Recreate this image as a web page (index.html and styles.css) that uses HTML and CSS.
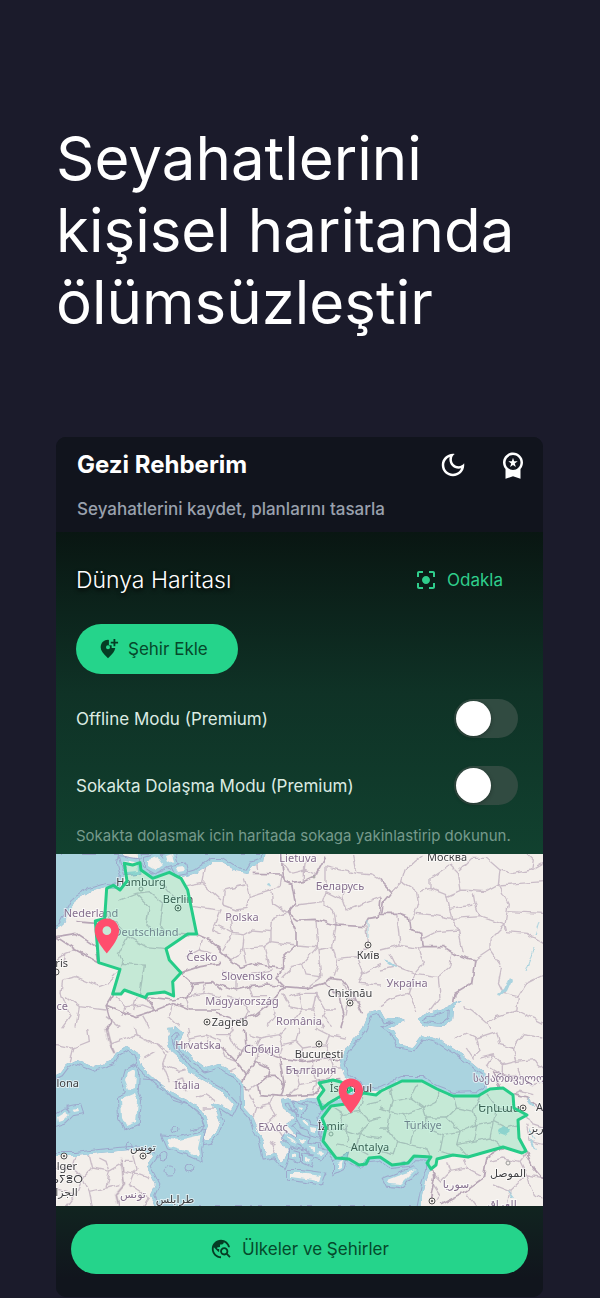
FILE: index.html
```html
<!DOCTYPE html>
<html lang="tr">
  <head>
    <meta charset="UTF-8">
    <meta name="viewport" content="width=device-width, initial-scale=1.0">
    <title>Gezi Rehberim</title>
    <link rel="stylesheet" href="styles.css">
  </head>
  <body>
    <h1 class="headline">Seyahatlerini kişisel haritanda ölümsüzleştir</h1>

    <main class="card">
      <header class="topbar">
        <div class="topbar-row">
          <h2 class="app-name">Gezi Rehberim</h2>
          <button class="icon-btn" type="button" aria-label="Koyu tema">
            <svg viewBox="0 0 24 24"><path d="M9.37,5.51C9.19,6.15,9.1,6.82,9.1,7.5c0,4.08,3.32,7.4,7.4,7.4c0.68,0,1.35-0.09,1.99-0.27C17.45,17.19,14.93,19,12,19c-3.86,0-7-3.14-7-7C5,9.07,6.81,6.55,9.37,5.51z M12,3c-4.97,0-9,4.03-9,9s4.03,9,9,9s9-4.03,9-9c0-0.46-0.04-0.92-0.1-1.36c-0.98,1.37-2.58,2.26-4.4,2.26c-2.98,0-5.4-2.42-5.4-5.4c0-1.81,0.89-3.42,2.26-4.4C12.92,3.04,12.46,3,12,3z"/></svg>
          </button>
          <button class="icon-btn" type="button" aria-label="Rozetler">
            <svg viewBox="0 0 24 24"><path d="M9.68,13.69L12,11.93l2.31,1.76l-0.88-2.85L15.75,9h-2.84L12,6.19L11.09,9H8.25l2.31,1.84L9.68,13.69z M20,10c0-4.42-3.58-8-8-8s-8,3.58-8,8c0,2.03,0.76,3.87,2,5.28V23l6-2l6,2v-7.72C19.24,13.87,20,12.03,20,10z M12,4c3.31,0,6,2.69,6,6s-2.69,6-6,6s-6-2.69-6-6S8.69,4,12,4z"/></svg>
          </button>
        </div>
        <p class="tagline">Seyahatlerini kaydet, planlarını tasarla</p>
      </header>

      <section class="world">
        <div class="world-head">
          <h3 class="world-title">Dünya Haritası</h3>
          <button class="focus-btn" type="button">
            <svg viewBox="0 0 24 24"><path d="M12 8c-2.21 0-4 1.79-4 4s1.79 4 4 4 4-1.79 4-4-1.79-4-4-4zm-7 7H3v4c0 1.1.9 2 2 2h4v-2H5v-4zM5 5h4V3H5c-1.1 0-2 .9-2 2v4h2V5zm14-2h-4v2h4v4h2V5c0-1.1-.9-2-2-2zm0 16h-4v2h4c1.1 0 2-.9 2-2v-4h-2v4z"/></svg>
            Odakla
          </button>
        </div>
        <button class="pill add-btn" type="button">
          <svg viewBox="0 0 24 24"><path fill-rule="evenodd" d="M20 1v3h3v2h-3v3h-2V6h-3V4h3V1zM13 2.1V8h3v3h3.9C19.6 14.2 16.9 17.800 12 22C6.700 17.500 4 13.500 4 10.200C4 5.200 7.800 2 12 2zM12 8a2.200 2.200 0 1 0 0 4.400a2.200 2.200 0 0 0 0-4.400z"/></svg>
          Şehir Ekle
        </button>
        <div class="option">
          <label for="offline">Offline Modu (Premium)</label>
          <input class="switch" type="checkbox" role="switch" id="offline">
        </div>
        <div class="option">
          <label for="street">Sokakta Dolaşma Modu (Premium)</label>
          <input class="switch" type="checkbox" role="switch" id="street">
        </div>
        <p class="hint">Sokakta dolasmak icin haritada sokaga yakinlastirip dokunun.</p>
      </section>

      <svg class="map" viewBox="56 854 487 352" role="img" aria-label="Harita">
        <defs>
          <filter id="rough" x="0" y="0" width="100%" height="100%" color-interpolation-filters="sRGB">
            <feTurbulence type="fractalNoise" baseFrequency="0.14" numOctaves="1" seed="4"/>
            <feDisplacementMap in="SourceGraphic" scale="6" xChannelSelector="R" yChannelSelector="G"/>
          </filter>
          <path id="water" d="M50 932L62 926L69 913L76 900L89 892L106 887L119 888L124 877L121 863L124 850H50Z
            M136 850L139 868L151 878L168 872L183 877L196 873L212 862L222 862L236 871L248 873L253 865L264 862L266 850Z
            M50 1078L60 1073L66 1065L76 1060L94 1067L111 1061L116 1053L128 1046L138 1053L143 1068L156 1080L173 1093L189 1101L203 1111L208 1125L203 1141L209 1140L216 1131L220 1121L216 1111L212 1103L223 1106L231 1111L234 1105L221 1091L203 1081L189 1071L179 1058L171 1051L168 1038L175 1026L183 1033L178 1043L189 1055L206 1068L220 1064L233 1073L243 1082L244 1108L253 1118L256 1128L263 1141L266 1156L275 1154L283 1163L288 1151L281 1141L299 1145L296 1135L286 1124L295 1118L283 1108L281 1100L290 1098L294 1106L302 1099L316 1098L325 1104L340 1098L349 1091L360 1092L350 1102L331 1106L321 1118L326 1128L323 1141L336 1158L349 1158L359 1165L369 1158L380 1157L391 1165L408 1163L414 1156L430 1157L430 1170L425 1185L420 1210H157L151 1195L156 1185L151 1175L146 1166L153 1156L144 1151L129 1150L99 1153L76 1156H50Z
            M363 1028L357 1036L349 1045L340 1061L344 1075L356 1083L363 1092L381 1090L402 1080L422 1080L437 1090L453 1096L478 1095L488 1088L487 1075L473 1063L457 1051L440 1040L422 1035L413 1047L400 1045L395 1033L388 1028L405 1021L398 1018L385 1019L380 1010L369 1013Z
            M417 1019L428 1013L440 1010L463 1000L453 1007L452 1020L443 1027L423 1025Z"/>
          <clipPath id="sea"><use href="#water"/></clipPath>
          <path id="isles" d="M127 1073l7-4l2 5l-1 14l-6 2l-4-10Z
            M121 1099l14-6l3 8l-2 21l-10 4l-4-8Z
            M167 1139l12 1l22-5l-3 13l1 9l-13-6l-16-5Z
            M291 1173l10 0l20 3l-2 5l-28-4Z
            M387 1180l10-4l18-6l-9 9l-6 6l-11-1Z
            M57 1117l8-5l4 3l-5 5l-6 2Z M72 1109l6-1l1 3l-5 1Z
            M301 1120l6 2l2 5l-6-2Z M311 1127l5 1l0 6l-4-1Z M300 1138l5 2l-1 4l-4-2Z M309 1146l6 1l0 4l-5-1Z M318 1151l5 1l-2 4l-4-1Z M292 1153l4 1l0 4l-4-1Z M305 1157l5 1l-1 4l-4-2Z M337 1163l6-3l-2 7l-4 2Z M298 1107l4 1l-2 3Z M287 1136l6 4l4 4l-5-2l-6-4Z
            M148 860l10-3l5 7l-8 6l-7-4Z M166 857l6-2l2 6l-6 2Z M176 868l7-1l1 4l-6 1Z M124 860l12 2l1 9l-10 1Z"/>
        </defs>

        <rect class="land" x="56" y="854" width="487" height="352"/>

        <g filter="url(#rough)">
          <!-- regions -->
          <g class="region">
            <path transform="translate(56 850) scale(.3333)" d="M20 350L30 310M20 390L60 380L130 410L155 400L192 358M30 440L70 470L150 480M20 390L15 430L45 500L20 535M70 470L60 530M0 330L30 310L60 300M190 310L215 260L270 290L330 296M190 310L200 340L265 345L250 440M200 340L192 358M152 190L190 230L215 260M240 130L280 170L270 230L330 250L400 255M190 150L240 130L280 125L320 160L310 220L330 250M320 100L350 140L400 150M440 100L495 150M410 170L495 180L470 240L495 250M450 40L440 100L390 110M350 460L340 500L370 530M400 480L390 440L440 430L450 395M180 440L210 470L200 500M240 445L230 480M210 470L260 465L300 480M150 500L190 530M260 500L280 535M390 320L430 300L470 310M430 300L440 270M440 430L495 440"/>
            <path transform="translate(216 850) scale(.3333)" d="M85 85L100 140L90 175L60 180L20 165L25 120L85 105M100 140L190 110L195 72M165 125L170 160L215 188M0 225L50 250L85 255L110 240L165 245M50 250L40 190M165 245L170 205L215 188M165 245L165 275L240 285M85 255L80 295L145 290L165 275M80 295L90 340M145 290L160 350M20 300L50 250M50 335L80 295M300 208L305 290L240 285M305 290L260 340L230 350L200 380M305 290L315 380L270 415M360 225L350 290L365 345L355 380M305 300L350 290M365 325L420 320L455 290L450 230M420 320L440 370L495 340M440 370L430 400L495 405M355 190L360 225M240 165L320 155L355 190M320 155L330 125L380 150L390 180L495 140M330 125L330 50L420 70L470 75L495 90M265 92L265 60L225 70L200 40M380 150L385 120M260 340L270 375L315 380M220 440L250 430L300 430L330 480L360 480M250 430L260 480L230 520M300 430L290 480L260 480M290 480L320 535M330 480L320 500L350 530M200 430L220 470L260 480M170 450L180 490L150 530M20 360L60 380L120 370L170 360M60 380L60 420M30 440L80 450L100 480L80 530M100 410L110 440L150 440M380 400L400 440L390 500M400 440L430 460M120 20L125 60M270 20L265 60L300 75M410 15L420 70"/>
            <path transform="translate(380 850) scale(.3333)" d="M65 95L75 60L130 15M65 95L110 125L115 155L105 190L90 215M65 95L35 125M120 125L150 115L200 135L210 180L215 205L160 195L110 190M150 115L150 85L210 45L235 70L243 120L200 140M243 120L320 125L355 105L360 60L320 25L275 25L240 60M280 130L285 160L300 200L215 205M210 175L280 165M355 105L385 160L375 225L300 200M355 105L420 100L490 95M360 60L400 70L455 60L490 40M385 185L490 190M375 225L380 245L440 250L490 280M215 205L235 240L250 310M130 265L170 245L235 240M375 225L330 270L330 300L285 330M330 300L365 350L355 400L370 430L415 440L410 480L350 500L320 520M415 440L440 400L490 375M0 300L60 285L50 190M60 285L115 295L130 340L105 370L50 350L30 310M115 295L130 290M105 370L175 380L210 350L215 310M175 380L180 440L150 480M105 370L85 430L45 440L0 470M85 430L110 480M275 480L320 520L330 540M410 480L490 520M275 480L250 470M0 360L50 350M455 60L460 30L440 10"/>
            <path transform="translate(56 1028) scale(.3333)" d="M0 50L50 60L40 100M50 60L100 40L95 0M175 75L160 50L240 20L235 0M240 20L300 50L330 80L320 110L340 160M300 50L340 70M265 90L300 70M320 110L370 130L390 125M420 210L450 200L480 220M350 160L380 150L390 190M440 240L480 240M60 385L50 420L80 450L60 500M100 380L110 420L80 450M110 420L160 430L195 410M130 390L150 400L160 430L150 480L100 490L80 450M150 480L190 470M100 490L110 540M205 430L260 440L280 450M230 380L240 420L220 470L250 490M60 500L30 540M0 420L50 420M0 480L60 500M250 490L280 510L260 540M205 400L230 400M395 0L400 30L450 20L495 40M400 30L390 60M450 20L460 60"/>
            <path transform="translate(216 1028) scale(.3333)" d="M0 20L40 20L60 60L85 70M40 20L50 0M100 20L130 30L120 50M130 30L190 20L200 50L190 90M190 20L210 0M200 50L240 40L260 60L250 100M240 40L250 0M260 60L330 50L340 90M330 50L340 20L300 0M340 20L390 30M210 120L240 130L250 170L220 200M240 130L290 120L300 160L250 170M290 120L290 90M300 160L340 150L350 120L380 120M300 160L290 200M350 120L340 90M100 200L120 240L110 270M120 240L160 230L180 260L150 290M160 230L170 205M120 100L130 70L170 80M140 300L190 310L210 340M160 340L180 350L170 380M20 60L30 90L60 100M95 190L125 170M60 120L40 130M350 240L380 260L370 300L330 310M380 260L430 250L440 210M430 250L460 280L430 320L370 300M430 320L420 360L360 350M460 280L495 270M420 360L460 380M390 290L395 340M450 230L495 220M430 320L495 330"/>
            <path transform="translate(380 1028) scale(.3333)" d="M30 180L40 220L90 210L110 170M90 210L130 240L170 220L180 190M40 220L30 250L0 240M30 250L70 260L130 240M130 240L140 270L200 270L230 240L220 205M230 240L280 250L300 204M280 250L290 290L240 310L200 270M290 290L340 280L350 240L320 200M350 240L400 250M340 280L380 300L415 290M340 280L330 330L370 358M240 310L230 350L265 387M240 310L190 320L140 300L140 270M190 320L180 370L218 380M140 300L100 310L70 260M100 310L90 350L50 340L20 300L30 250M90 350L140 360L150 387M50 340L40 380L0 370M290 290L280 340L330 330M280 340L230 350M0 300L20 300M225 30L260 15L290 30L300 70L280 90L260 60M290 30L350 10L360 50L400 60L430 20L490 30M400 60L410 100L370 110L340 80L300 90M410 100L460 95L490 120M340 80L320 110L370 140L370 110M370 160L420 150L460 170L490 160M420 150L410 120M400 200L420 190L460 200M440 260L460 290L490 300M440 290L450 340L490 350M200 400L210 430L180 460L160 440M210 430L260 420L300 440M260 420L250 390M330 400L370 390L420 400L440 375M420 400L440 440L490 450M340 470L390 490L440 440M390 490L380 540M260 500L290 540M440 440L460 500L490 510M160 470L180 500L170 520"/>
          </g>
          <!-- borders between countries -->
          <g class="border">
            <path transform="translate(56 850) scale(.3333)" d="M0 260L60 250L120 290L128 338L60 300L0 260M170 432L150 465L210 490L240 500L300 480L270 440M150 465L165 520L150 540M420 252L460 270L495 300M375 368L430 350L495 340M270 440L350 450L400 440L410 400L375 368M410 400L470 395L495 420M300 480L350 460L400 480L495 480M60 215L120 220"/>
            <path transform="translate(216 850) scale(.3333)" d="M110 70L195 72L205 95L228 105L238 160L215 188L240 245L240 285L200 325L200 355L160 350L110 340L75 352L50 335L0 290M215 188L245 210L300 208L360 225L445 230L460 205L490 200L495 140M228 97L265 92L300 75L330 20M200 355L180 385L205 410L270 415L325 400L340 385L380 390L410 430L440 490M205 410L150 405L100 410L60 420L0 400M205 410L150 470L120 495L60 510L0 490M325 400L370 440L385 500L375 535M195 20L205 95"/>
            <path transform="translate(380 850) scale(.3333)" d="M0 90L35 125L10 155L5 190L60 190L85 200L90 240L125 250L130 290L190 290L230 315L285 330L275 400L225 430L220 470"/>
            <path transform="translate(56 1028) scale(.3333)" d="M150 0L160 40L175 75M195 390L205 470L180 500L190 540M340 0L345 20"/>
            <path transform="translate(216 1028) scale(.3333)" d="M60 100L90 140L75 170L95 190M90 140L120 100L160 120L155 145L125 170L130 200L195 205L205 170L180 145L155 145M195 205L290 200L310 190L310 160L370 155M205 170L190 90L260 100L330 90L400 100M60 100L20 60L0 50M85 0L90 50L120 60L190 90M60 100L90 50"/>
            <path transform="translate(380 1028) scale(.3333)" d="M340 130L360 180M340 130L420 150M400 200L440 210L495 250M438 370L460 420L495 460M370 358L320 390L310 450L240 500L180 530M140 410L165 440L150 520"/>
          </g>
          <!-- sea with its outer limit line -->
          <g clip-path="url(#sea)">
            <use href="#water" class="water"/>
            <use href="#water" class="limit"/>
            <use href="#water" class="shelf"/>
          </g>
          <use href="#isles" class="limit"/>
          <use href="#isles" class="shelf"/>
          <use href="#isles" class="land"/>
          <g class="limit-line">
            <path d="M143 1079L155 1080L168 1091L173 1100L189 1105L201 1116L204 1127L190 1130"/>
            <circle cx="175" cy="1129" r="3"/><circle cx="163" cy="1156" r="4"/><circle cx="189" cy="1168" r="4"/><ellipse cx="170" cy="1171" rx="6" ry="4"/><circle cx="129" cy="1146" r="4"/>
          </g>
          <path class="water" d="M498 1130l4-4l6 2l2 4l-5 4l-6-2ZM498 994l6-4l6-12l2 2l-5 11l-7 6ZM384 960l6 2l8 6l-2 1l-8-5ZM527 1098l4 2l4 7l-3 0ZM530 1138l3 4l4 8l-3-1ZM508 1190l3 4l3 4l-3 0ZM168 1028l5-1l0 6l-4 1ZM268 884l3 1l-1 2l-3-1Z"/>
          <path class="river" d="M526 972l5-13l4-12M536 935l4-14M368 920v18M530 1128l4 12"/>
        </g>

        <g class="country">
          <text x="91" y="917">Nederland</text>
          <text x="146" y="936">Deutschland</text>
          <text x="242" y="921">Polska</text>
          <text x="298" y="862">Lietuva</text>
          <text x="340" y="890">Беларусь</text>
          <text x="202" y="961">Česko</text>
          <text x="247" y="980">Slovensko</text>
          <text x="242" y="1005">Magyarország</text>
          <text x="407" y="987">Україна</text>
          <text x="299" y="1025">România</text>
          <text x="198" y="1049">Hrvatska</text>
          <text x="262" y="1053">Србија</text>
          <text x="311" y="1074">България</text>
          <text x="187" y="1089">Italia</text>
          <text x="273" y="1131">Ελλάς</text>
          <text x="423" y="1129">Türkiye</text>
          <text x="456" y="1188">سوريا</text>
          <text x="133" y="1198">تونس</text>
          <text x="502" y="1208">العراق</text>
          <text class="from" x="473" y="1082">საქართველო</text>
          <text class="to" x="68" y="1010">ce</text>
        </g>
        <g class="city">
          <text x="141" y="886">Hamburg</text>
          <text x="178" y="903">Berlin</text>
          <text x="447" y="861">Москва</text>
          <text x="368" y="959">Київ</text>
          <text x="350" y="997">Chișinău</text>
          <text x="230" y="1026">Zagreb</text>
          <text x="319" y="1058">București</text>
          <text x="351" y="1092">İstanbul</text>
          <text x="331" y="1130">İzmir</text>
          <text x="370" y="1151">Antalya</text>
          <text x="499" y="1112">Երևան</text>
          <text x="508" y="1177">الموصل</text>
          <text x="143" y="1151">تونس</text>
          <text x="175" y="1203">طرابلس</text>
          <text x="540" y="1132">تبریز</text>
          <text class="to" x="68" y="967">ris</text>
          <text class="to" x="79" y="1087">lona</text>
          <text class="to" x="77" y="1170">lger</text>
          <text class="to" x="83" y="1183">ⴰⵢⴻⵔ</text>
          <text x="62" y="1196">الجزائر</text>
          <text class="from" x="536" y="1111">A</text>
        </g>
        <g class="capital">
          <circle cx="178" cy="908" r="3"/><circle cx="368" cy="945" r="3"/><circle cx="350" cy="1003" r="3"/><circle cx="207" cy="1022" r="3"/><circle cx="319" cy="1044" r="3"/><circle cx="523" cy="1108" r="3"/><circle cx="143" cy="1156" r="3"/><circle cx="64" cy="1156" r="3"/><circle cx="432" cy="1201" r="3"/><circle cx="56" cy="972" r="3"/>
        </g>
        <g class="dot">
          <circle cx="178" cy="908" r="1"/><circle cx="368" cy="945" r="1"/><circle cx="350" cy="1003" r="1"/><circle cx="207" cy="1022" r="1"/><circle cx="319" cy="1044" r="1"/><circle cx="523" cy="1108" r="1"/><circle cx="143" cy="1156" r="1"/><circle cx="64" cy="1156" r="1"/><circle cx="432" cy="1201" r="1"/>
        </g>
        <g class="town">
          <circle cx="141" cy="889" r="2"/><circle cx="314" cy="877" r="1"/><circle cx="331" cy="1134" r="2"/><circle cx="508" cy="1163" r="2"/>
        </g>

        <!-- visited countries -->
        <g class="visited">
          <path transform="translate(56 850) scale(.3333)" d="M205 40L230 45L252 38L255 60L290 85L340 67L375 85L395 120L422 252L395 252L330 296L340 330L375 368L350 395L353 438L325 426L275 432L268 443L205 420L195 432L170 432L192 358L128 338L118 213L146 205L152 115L172 106L192 120L213 93Z"/>
          <path d="M322 1118L331 1106L353 1103L363 1093L376 1095L381 1091L402 1081L422 1081L437 1089L453 1096L478 1096L490 1089L503 1088L513 1095L514 1108L527 1115L518 1120L519 1138L526 1151L522 1153L503 1147L468 1157L453 1155L437 1159L436 1165L431 1169L427 1163L431 1157L414 1156L408 1163L392 1165L380 1157L369 1158L366 1164L359 1165L349 1159L336 1158L323 1141L326 1128Z"/>
          <path d="M319 1083L333 1080L341 1082L352 1090L341 1096L329 1103L322 1109L318 1098L324 1090Z"/>
        </g>

        <g class="pin">
          <path transform="translate(86 915) scale(1.740)" d="M12 2C8.130 2 5 5.130 5 9c0 5.250 7 13 7 13s7-7.750 7-13c0-3.870-3.130-7-7-7zm0 9.500a2.500 2.500 0 0 1 0-5a2.500 2.500 0 0 1 0 5z"/>
          <path transform="translate(330 1075) scale(1.740)" d="M12 2C8.130 2 5 5.130 5 9c0 5.250 7 13 7 13s7-7.750 7-13c0-3.870-3.130-7-7-7zm0 9.500a2.500 2.500 0 0 1 0-5a2.500 2.500 0 0 1 0 5z"/>
        </g>
      </svg>

      <footer class="bottom">
        <button class="pill list-btn" type="button">
          <svg viewBox="0 0 24 24"><path d="M19.3,16.9c0.4-0.7,0.7-1.5,0.7-2.4c0-2.5-2-4.5-4.5-4.5S11,12,11,14.5s2,4.5,4.5,4.5c0.9,0,1.7-0.3,2.4-0.7l3.2,3.2l1.4-1.4L19.3,16.9z M15.5,17c-1.4,0-2.5-1.1-2.5-2.5s1.1-2.5,2.5-2.5s2.5,1.1,2.5,2.5S16.9,17,15.5,17z M12,20v2C6.48,22,2,17.52,2,12C2,6.48,6.48,2,12,2c4.84,0,8.87,3.44,9.8,8h-2.07c-0.64-2.46-2.4-4.47-4.73-5.41V5c0,1.1-0.9,2-2,2h-2v2c0,0.55-0.45,1-1,1H8v2h2v3H9l-4.79-4.79C4.08,10.79,4,11.38,4,12C4,16.41,7.59,20,12,20z"/></svg>
          Ülkeler ve Şehirler
        </button>
      </footer>
    </main>
  </body>
</html>
```
FILE: styles.css
```css
* {
  box-sizing: border-box;
}

body {
  margin: 0;
  padding: 122px 57px 1px 56px;
  font-family: Inter, 'Liberation Sans', sans-serif;
  color: #fff;
  background: #1b1b2b;
}

h1, h2, h3, p {
  margin: 0;
}

button {
  display: flex;
  align-items: center;
  justify-content: center;
  padding: 0;
  border: none;
  background: none;
  font-family: inherit;
  font-size: 17px;
  cursor: pointer;
}

button svg {
  width: 22px;
  height: 22px;
  fill: currentColor;
}

.headline {
  margin-bottom: 99px;
  font-size: 60px;
  font-weight: 400;
  line-height: 72px;
}

.card {
  border-radius: 10px;
  overflow: hidden;
  background: #11151d;
}

.topbar {
  padding: 0 0 6px 21px;
  background: #11141d;
}

.topbar-row {
  display: flex;
  align-items: center;
  height: 55px;
}

.app-name {
  flex: 1;
  font-size: 24px;
  font-weight: 700;
}

.icon-btn {
  width: 60px;
  height: 55px;
  color: #fff;
}

.icon-btn svg {
  width: 30px;
  height: 30px;
}

.tagline {
  color: #9aa1ad;
  font-size: 17px;
  font-weight: 500;
  line-height: 34px;
}

.world {
  padding: 24px 25px 8px 20px;
  background: linear-gradient(to bottom, #091612, #0f3226 50%, #11412f);
}

.world-head {
  display: flex;
  align-items: center;
  justify-content: space-between;
  height: 48px;
  margin-bottom: 20px;
}

.world-title {
  font-size: 23px;
  font-weight: 300;
  text-shadow: 0 2px 4px #000;
}

.focus-btn {
  gap: 9px;
  padding: 0 15px;
  color: #2fce8c;
}

.focus-btn svg {
  width: 24px;
  height: 24px;
}

.pill {
  height: 50px;
  border-radius: 25px;
  color: #06492b;
  background: #25d48b;
}

.pill svg {
  fill: #053d24;
}

.add-btn {
  gap: 9px;
  padding: 0 30px 0 21px;
  margin-bottom: 11px;
}

.option {
  display: flex;
  align-items: center;
  justify-content: space-between;
  height: 67px;
  color: #dcebe3;
  font-size: 17px;
}

.switch {
  appearance: none;
  width: 64px;
  height: 39px;
  margin: 0;
  padding: 2px;
  border-radius: 20px;
  background: #314b41;
  cursor: pointer;
}

.switch::before {
  content: "";
  display: block;
  width: 35px;
  height: 35px;
  border-radius: 50%;
  background: #fff;
  box-shadow: 0 1px 4px rgba(0, 0, 0, 0.3);
}

.switch:checked {
  background: #25d48b;
}

.switch:checked::before {
  margin-left: auto;
}

.hint {
  padding-top: 7px;
  color: #769a8c;
  font-size: 15px;
  line-height: 20px;
  white-space: nowrap;
}

/* map */

.map {
  display: block;
  width: 100%;
  font-family: 'Noto Sans', 'DejaVu Sans', sans-serif;
  font-size: 11px;
  background: #f3efeb;
}

.land {
  fill: #f3efeb;
}

.water {
  fill: #aad3df;
}

.region {
  fill: none;
  stroke: #c9bcc7;
  stroke-width: 4;
}

.border {
  fill: none;
  stroke: #b7a6b6;
  stroke-width: 5;
}

.limit {
  fill: none;
  stroke: #9da8cc;
  stroke-width: 8;
}

.shelf {
  fill: none;
  stroke: #a8d4e1;
  stroke-width: 6;
}

.limit-line {
  fill: none;
  stroke: #9da8cc;
}

.river {
  fill: none;
  stroke: #aad3df;
}

.country,
.city {
  text-anchor: middle;
  paint-order: stroke;
  stroke: rgba(255, 255, 255, 0.6);
  stroke-width: 2px;
}

.country {
  fill: #856f8e;
}

.city {
  fill: #3f3f42;
}

.from {
  text-anchor: start;
}

.to {
  text-anchor: end;
}

.capital,
.town {
  fill: #f3efeb;
  stroke: #555;
}

.town {
  stroke: #999;
}

.dot {
  fill: #444;
}

.visited {
  fill: rgba(37, 212, 139, 0.22);
  stroke: #25cc88;
  stroke-width: 3;
  stroke-linejoin: round;
}

.visited path {
  vector-effect: non-scaling-stroke;
}

.pin {
  fill: #ff4d6d;
}

.bottom {
  padding: 18px 15px 23px;
  background: linear-gradient(to bottom, #112420, #11151d 80%);
}

.list-btn {
  gap: 10px;
  width: 100%;
}
```
